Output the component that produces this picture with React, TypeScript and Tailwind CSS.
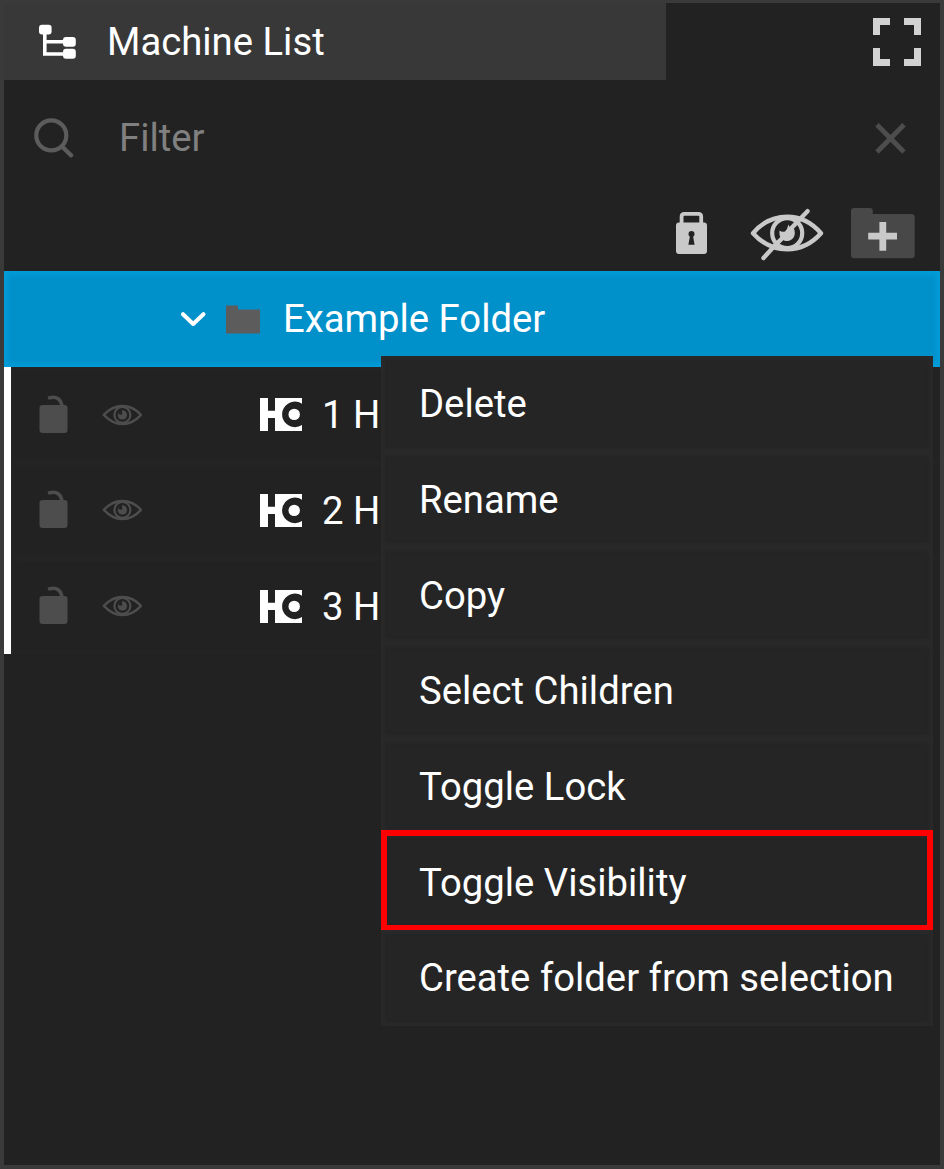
import React from "react";

const machines = ["1 H", "2 H", "3 H"];

const actions = [
  "Delete",
  "Rename",
  "Copy",
  "Select Children",
  "Toggle Lock",
  "Toggle Visibility",
  "Create folder from selection",
];

function TreeIcon() {
  return (
    <svg width="40" height="36" viewBox="38 23.5 40 36" fill="#fff" className="shrink-0">
      <path d="M44.8 33V53.5H63M44.8 41.2H63" fill="none" stroke="#fff" strokeWidth="3.6" />
      <rect x="39" y="24.3" width="12.6" height="9.8" rx="3" />
      <rect x="63" y="36.5" width="12.8" height="9.7" rx="3" />
      <rect x="63" y="48.3" width="12.8" height="9.9" rx="3" />
    </svg>
  );
}

function FullscreenIcon() {
  return (
    <svg width="48" height="48" viewBox="0 0 48 48" fill="#d2d2d2">
      <path d="M0 0H17V7H7V17H0ZM31 0H48V17H41V7H31ZM0 30H7V41H17V48H0ZM41 30H48V48H31V41H41Z" />
    </svg>
  );
}

function SearchIcon() {
  return (
    <svg width="40" height="40" viewBox="34 118 40 40" fill="none" stroke="#5c5c5c" className="shrink-0">
      <circle cx="51.3" cy="135.4" r="15" strokeWidth="4.2" />
      <path d="M62 146.5L71 155.3" strokeWidth="4.4" strokeLinecap="round" />
    </svg>
  );
}

function ClearIcon() {
  return (
    <svg width="32" height="32" viewBox="874 122 32 32" fill="none" stroke="#4d4d4d" strokeWidth="4.8">
      <path d="M877 124.7L904 152M904 124.7L877 152" />
    </svg>
  );
}

function LockIcon() {
  return (
    <svg width="32" height="44" viewBox="676 211 32 44" className="shrink-0">
      <path d="M681.6 224V216.5Q681.6 213.8 684.3 213.8H698.4Q701.2 213.8 701.2 216.5V224" fill="none" stroke="#c9c9c9" strokeWidth="3.8" />
      <rect x="676" y="222.5" width="31" height="31.5" rx="3" fill="#c9c9c9" />
      <circle cx="691.5" cy="234" r="3" fill="#222" />
      <path d="M690.2 235H692.8L694.6 244.8H688.4Z" fill="#222" />
    </svg>
  );
}

function HiddenEyeIcon() {
  return (
    <svg width="74" height="54" viewBox="750 208 74 54" fill="none" stroke="#c9c9c9" className="shrink-0">
      <path d="M753 233.2C763 221.5 775 216.7 787 216.7C799 216.7 811 221.5 821 233.2C811 244.5 799 249.2 787 249.2C775 249.2 763 244.5 753 233.2Z" strokeWidth="4.4" strokeLinejoin="round" />
      <circle cx="787.2" cy="233.2" r="15" strokeWidth="4.2" />
      <path d="M779.5 230.5Q778.5 238 784 240.5A8 8 0 0 0 794.8 232.5Q794.8 229.5 792.8 227.5L790.5 229L788.5 224.5Q787.5 229 785 231.5Q782 232.5 779.5 230.5Z" fill="#c9c9c9" stroke="none" />
      <path d="M763.5 258L775.5 244.8L783 237.5M791 228.5L807.5 211.2" strokeWidth="4.4" strokeLinecap="round" />
    </svg>
  );
}

function AddFolderIcon() {
  return (
    <svg width="64" height="52" viewBox="851 207 64 52" className="shrink-0">
      <path d="M854 208H870Q872.8 208 872.8 211V214H911.5Q914.7 214 914.7 217.2V255Q914.7 258.2 911.5 258.2H854.2Q851 258.2 851 255V211Q851 208 854 208Z" fill="#484848" />
      <path d="M868.2 236.2H897M882.8 222V250.8" stroke="#c9c9c9" strokeWidth="6.8" />
    </svg>
  );
}

function UnlockIcon() {
  return (
    <svg width="29" height="38" viewBox="39 396 29 38" className="shrink-0 overflow-visible">
      <path d="M49.5 397.8C56 395.8 61.8 399 61.8 407" fill="none" stroke="#4d4d4d" strokeWidth="3.6" strokeLinecap="round" />
      <rect x="39.5" y="405" width="28" height="28" rx="3" fill="#4d4d4d" />
    </svg>
  );
}

function EyeIcon() {
  return (
    <svg width="40" height="22" viewBox="102 403.8 40 22" fill="none" stroke="#4d4d4d" className="shrink-0">
      <path d="M103.8 414.7C110 408 116 405.8 122.5 405.8C129 405.8 135 408 141 414.7C135 421.3 129 423.8 122.5 423.8C116 423.8 110 421.3 103.8 414.7Z" strokeWidth="2.4" strokeLinejoin="round" />
      <circle cx="122.4" cy="414.7" r="8" strokeWidth="2.2" />
      <circle cx="122.4" cy="414.7" r="4.6" fill="#4d4d4d" stroke="none" />
      <path d="M122.2 414.5L118.5 414L119.5 410L122 409.8Z" fill="#222" stroke="none" />
    </svg>
  );
}

function MachineLogo() {
  return (
    <svg width="42" height="33" viewBox="0 0 42 33" fill="#fff" className="shrink-0">
      <path d="M0 0H8V12.7H15V0H42V5.7A12.8 12.8 0 1 0 42 27V33H15V20H8V33H0Z" />
      <circle cx="34.2" cy="16.4" r="5.7" />
    </svg>
  );
}

export default function App() {
  return (
    <div className="relative flex h-[1169px] w-[944px] flex-col overflow-hidden border-x-4 border-t-[3px] border-b-4 border-[#3a3a3a] bg-[#222222] font-['Roboto',sans-serif] text-[38.25px] leading-none text-white">
      <header className="flex h-[77px] shrink-0 justify-between">
        <div className="flex w-[662px] items-center bg-[#383838] pl-[34px]">
          <TreeIcon />
          <h1 className="ml-[29px] whitespace-nowrap pt-[2px]">Machine List</h1>
        </div>
        <button className="mr-[19px] flex items-center">
          <FullscreenIcon />
        </button>
      </header>

      <div className="flex h-[115px] shrink-0 items-center pl-[30px] pr-[34px]">
        <SearchIcon />
        <span className="ml-[45px] grow pt-[2px] text-[#808080]">Filter</span>
        <ClearIcon />
      </div>

      <div className="flex h-[76px] shrink-0 items-center justify-end pr-[25px]">
        <LockIcon />
        <span className="ml-[42px] flex pt-[4px]"><HiddenEyeIcon /></span>
        <span className="ml-[27px]"><AddFolderIcon /></span>
      </div>

      <div className="flex h-24 shrink-0 items-center bg-[#0090ca] pl-[176px] shadow-[inset_0_0_5px_4px_#009cd9]">
        <svg width="26" height="16" viewBox="0 0 26 16" fill="none" stroke="#fff" strokeWidth="4" strokeLinecap="round" strokeLinejoin="round" className="shrink-0">
          <path d="M3 3.2L13.2 13L23.4 3.2" />
        </svg>
        <svg width="35" height="29" viewBox="0 0 35 29" fill="#5c5c5c" className="ml-5 shrink-0">
          <path d="M0 .5H12V4.5H34V28.5H0Z" />
        </svg>
        <span className="ml-[22px] whitespace-nowrap">Example Folder</span>
      </div>

      <ul className="shrink-0 border-l-[7px] border-white">
        {machines.map((name) => (
          <li key={name} className="flex h-[95.67px] items-center pl-[28px] shadow-[inset_0_0_3px_4px_#242424]">
            <UnlockIcon />
            <span className="ml-[34px]"><EyeIcon /></span>
            <span className="ml-[118px]"><MachineLogo /></span>
            <span className="ml-5 whitespace-nowrap pt-[1.2px]">{name}</span>
          </li>
        ))}
      </ul>

      <ul className="absolute left-[377px] top-[353px] w-[552px] bg-[#252525]">
        {actions.map((action) => (
          <li key={action} className="relative flex h-[95.67px] items-center pl-[38px] shadow-[inset_0_0_3px_4px_#292929]">
            <span className="whitespace-nowrap pt-[1.2px]">{action}</span>
            {action === "Toggle Visibility" && (
              <span className="absolute -top-[4.35px] left-0 h-[101.2px] w-[552px] border-[6px] border-[#ff0000]" />
            )}
          </li>
        ))}
      </ul>
    </div>
  );
}
